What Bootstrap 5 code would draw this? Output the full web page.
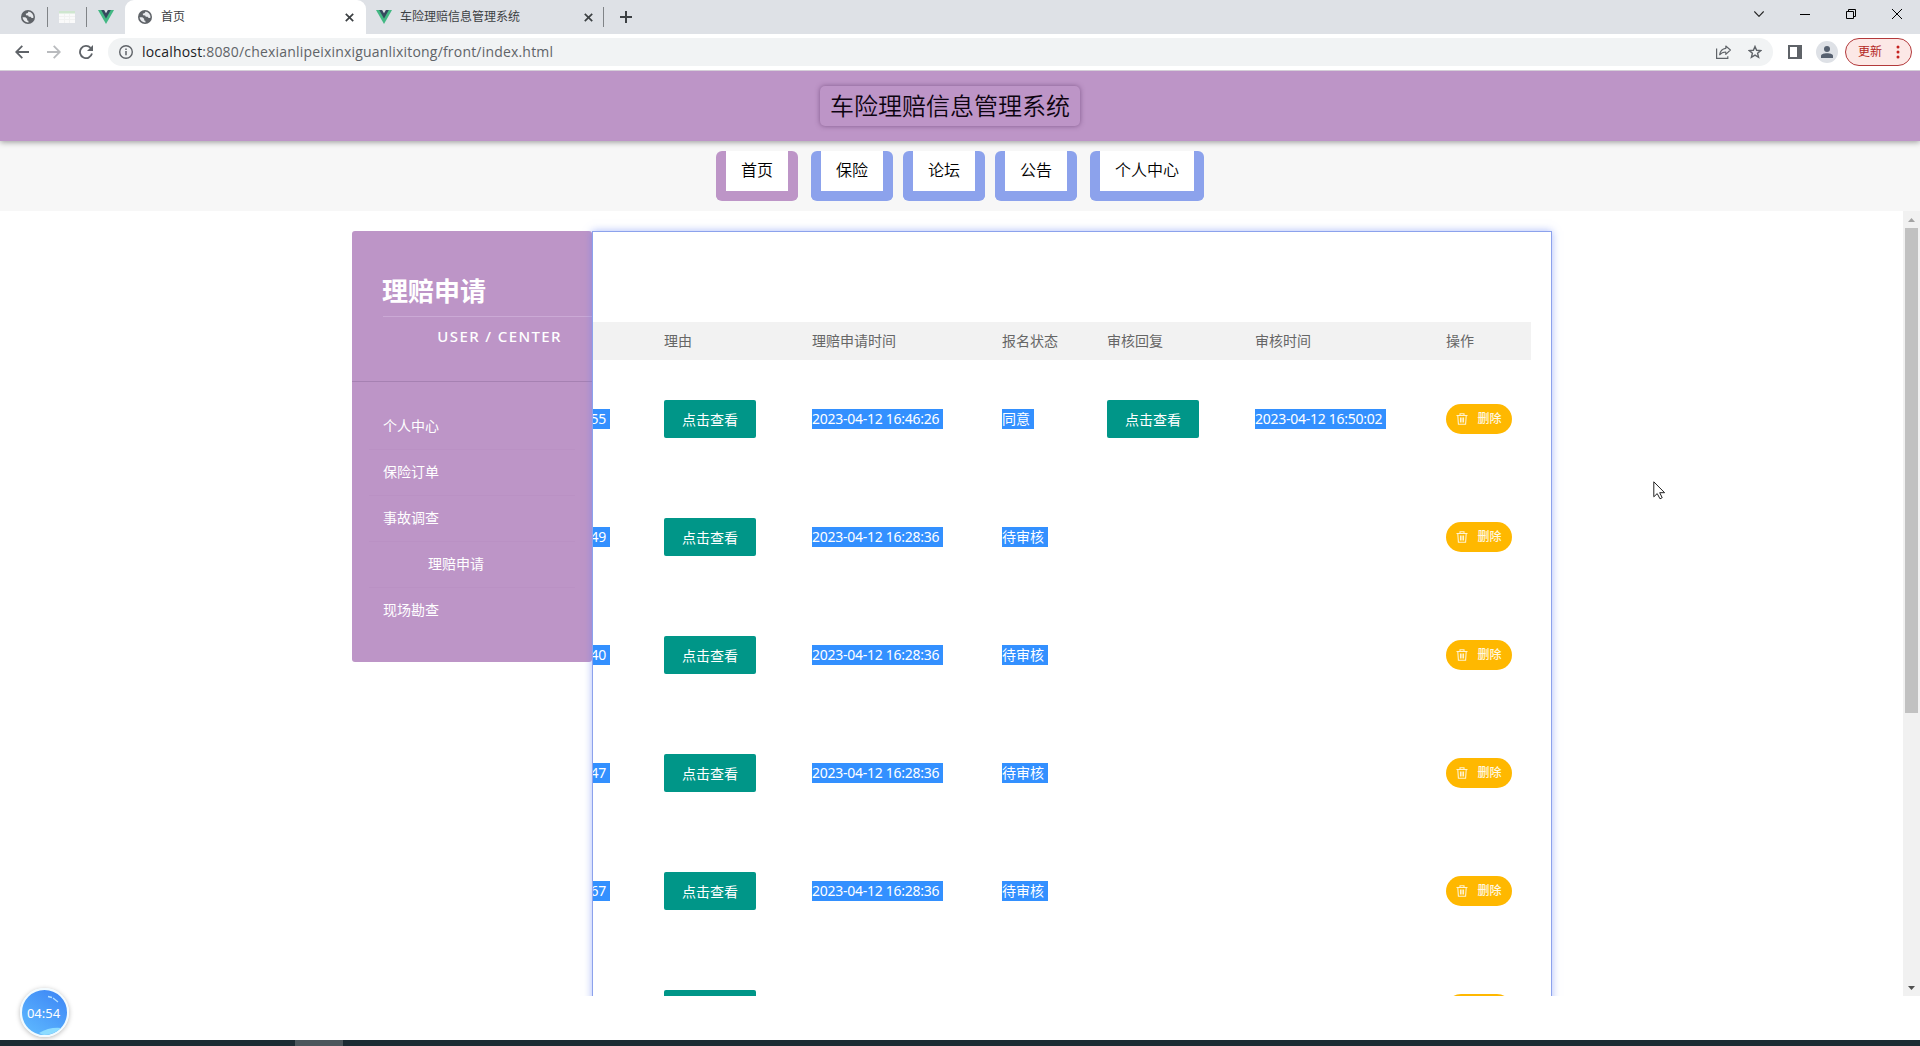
<!DOCTYPE html>
<html lang="zh-CN">
<head>
<meta charset="utf-8">
<title>首页</title>
<link href="https://cdn.jsdelivr.net/npm/bootstrap@5.3.0/dist/css/bootstrap.min.css" rel="stylesheet">
<style>
html{height:1046px;overflow:hidden}
body{font-family:"Noto Sans","Noto Sans CJK SC",sans-serif;font-size:14px;line-height:20px;color:#000;width:1920px;height:1046px;overflow:hidden;background:#fff}
svg{display:block;flex:none}
.tabstrip{height:34px;background:#dee1e6;font-size:12px;color:#3c4043;padding-left:21px}
.pinned{height:34px}
.tabsep{width:1px;height:20px;background:#808387}
.tab-on{width:241px;height:34px;background:#fff;border-radius:9px 9px 0 0;margin-left:11px;padding:0 12px 0 13px}
.tab-off{width:237px;padding:0 10px 0 10px}
.tabtext{line-height:28px;height:28px}
.wincontrols{margin-right:18px;height:28px;gap:36px}
.toolbar{height:37px;border-bottom:1px solid #d5cfd8;padding:0 8px 1px 15px;color:#5f6368}
.navicons{gap:18px}
.address{width:1665px;height:28px;border-radius:14px;background:#f1f3f4;margin-left:15px;padding:0 11px}
.url{font-family:"Open Sans","Noto Sans",sans-serif;margin-left:9px;white-space:nowrap;letter-spacing:.19px;color:#5f6368}
.url b{font-weight:400;color:#202124}
.sidepanel{margin-left:15px}
.avatar{width:22px;height:22px;background:#dee1e6;margin-left:14px}
.update{width:67px;height:28px;border:1px solid #b3393b;border-radius:14px;background:#fce8e6;color:#b3261e;font-size:12px;margin-left:7px;padding:0 11px 0 12px}
.masthead{height:70px;background:#bd95c7;box-shadow:0 1px 6px rgba(0,0,0,.4);padding-right:20px;position:relative;clip-path:inset(0 0 -10px 0)}
.brand{width:260px;height:40px;border-radius:5px;box-shadow:0 0 5px rgba(70,30,80,.5);font-size:24px;line-height:39px;color:#0d0410;font-weight:350}
.mainnav{height:70px;background:#f7f7f7;padding:10px 0 0 716px}
.navtab{height:50px;border:10px solid #8ca2ec;border-top:0;border-radius:6px;background:linear-gradient(#fff,#fff) padding-box;padding:0 15px;font-size:16px;line-height:38px;color:#000;font-weight:350;text-decoration:none;margin-right:10px}
.navtab.wide{margin-left:3px}
.navtab.current{border-color:#bd95c7}
.viewport{height:785px;overflow:hidden}
.stage{padding:20px 0 0 352px}
.sidebar{width:240px;height:431px;background:#bd95c7;border-radius:3px;color:#fff}
.sidehead{height:151px;border-bottom:1px solid #a681b2;padding:41px 0 0 31px}
.sidehead h1{font-size:26px;line-height:38px;height:45px;font-weight:700;margin:0;border-bottom:1px solid #cba9d5;text-indent:-1px}
.sidehead p{font-size:15px;line-height:20px;letter-spacing:1.4px;font-weight:500;padding:9px 30px 0 0;text-align:right}
.sidemenu{padding:22px 17px 0 17px}
.sidemenu a{height:46px;line-height:43px;color:#fff;text-decoration:none;padding-left:14px;border-bottom:1px solid #ba91c4}
.sidemenu a.sub{padding-left:59px}
.sidemenu a:last-child{border:0}
.panel{width:960px;height:1100px;border:1px solid #8ca2ec;box-shadow:0 0 8px rgba(100,130,245,.55);padding-top:90px}
.claims{width:938px;table-layout:fixed;margin:0}
.claims th{height:38px;background:#f2f2f2;color:#666;font-weight:400;padding:0 15px 1px;text-align:left}
.claims td{height:118px;padding:0 15px;vertical-align:middle}
.claims td:first-child{padding-left:0}
.orderclip{width:17px;overflow:hidden;display:flex;justify-content:flex-end}
.picked{background:#3390ff;color:#fff;display:block;width:max-content;height:20px;line-height:20px;padding-right:4px;white-space:nowrap;letter-spacing:-.26px}
.picked.han{letter-spacing:0;line-height:19px}
.btn-view{display:block;width:92px;height:38px;background:#009688;color:#fff;border:0;border-radius:2px;font-size:14px;padding:0;line-height:37px}
.btn-del{width:66px;height:30px;background:#ffb800;color:#fff8e4;border:0;border-radius:15px;font-size:12px;font-weight:500;padding:0;line-height:30px;gap:9px}
.vbar{width:17px;background:#f1f1f1;padding:7px 0 6px}
.vthumb{width:13px;height:485px;background:#c1c1c1;margin-top:6px}
.footer-gap{height:44px}
.taskbar{height:6px;background:#1c2b33;padding-left:295px}
.taskbar span{width:48px;height:6px;background:#4c565c}
.clock{position:absolute;left:20px;top:988px;width:49px;height:49px;border:2px solid #f2fbff;border-radius:50%;background:linear-gradient(35deg,#60bcff,#3b83f5);color:#fff;font-size:13px;box-shadow:0 1px 5px rgba(0,0,0,.28);overflow:hidden;padding-right:2px}
.clock svg{position:absolute;left:0;top:0}
.clock span{position:relative}
.pointer{position:absolute;left:1653px;top:481px}
</style>
<script src="https://cdn.jsdelivr.net/npm/bootstrap@5.3.0/dist/js/bootstrap.bundle.min.js"></script>
</head>
<body>
<svg width="0" height="0" class="position-absolute">
<defs>
<symbol id="globe" viewBox="0 0 16 16"><circle cx="8" cy="8" r="8" fill="#5f6368"/><path d="M1.8 8.2 5 8.400l2.200 1.800-.4 1.400 1.600.7.2 2A6.300 6.300 0 0 1 1.800 8.200zM8.600 1.800l-.9 1.600-2.300.8.4 1.800 2.400.2.7 1.400 2 .2 1.300 1.400h1.900A6.300 6.300 0 0 0 8.600 1.800z" fill="#e8eaed"/></symbol>
<symbol id="vue" viewBox="0 0 16 14"><path d="M0 0h16L8 14z" fill="#42b883"/><path d="M3.2 0h9.6L8 8.6z" fill="#35495e"/><path d="M6.1 0h3.8L8 3.3z" fill="#dee1e6"/></symbol>
<symbol id="cross" viewBox="0 0 8 8"><path d="M.7.7l6.600 6.600M7.300.7.7 7.300" stroke="#3c4043" stroke-width="1.5"/></symbol>
<symbol id="bin" viewBox="0 0 12 12"><path d="M.5 2.500h11M4 2V.8h4V2M1.800 2.700l.6 8.600h7.200l.6-8.600M4.500 4.500v5M6 4.500v5M7.500 4.500v5" fill="none" stroke="#fff3d2" stroke-width="1.1"/></symbol>
</defs></svg>

<div class="tabstrip d-flex align-items-center">
  <div class="pinned d-flex align-items-center">
    <svg width="14" height="14"><use href="#globe"/></svg>
    <i class="tabsep" style="margin-left:12px"></i>
    <svg width="16" height="12" viewBox="0 0 16 12" style="margin-left:11px"><path d="M0 0h16v12H0z" fill="#fafafa"/><path d="M0 0h16v2.500H0z" fill="#cfe6cf"/><path d="M0 5.500h16M0 8.500h16M5.500 3v9M10.500 3v9" stroke="#f1f2f1"/></svg>
    <i class="tabsep" style="margin-left:11px"></i>
    <svg width="16" height="14" style="margin-left:11px"><use href="#vue"/></svg>
  </div>
  <div class="tab-on d-flex align-items-center">
    <svg width="14" height="14"><use href="#globe"/></svg><span class="tabtext" style="margin-left:9px">首页</span>
    <svg width="9" height="9" class="ms-auto"><use href="#cross"/></svg>
  </div>
  <div class="tab-off d-flex align-items-center">
    <svg width="16" height="14"><use href="#vue"/></svg><span class="tabtext ms-2">车险理赔信息管理系统</span>
    <svg width="9" height="9" class="ms-auto"><use href="#cross"/></svg>
  </div>
  <i class="tabsep"></i>
  <svg width="12" height="12" viewBox="0 0 12 12" style="margin-left:16px"><path d="M6 0v12M0 6h12" stroke="#3c4043" stroke-width="2"/></svg>
  <div class="wincontrols ms-auto d-flex align-items-center align-self-start">
    <svg width="10" height="6" viewBox="0 0 10 6"><path d="M.3.5 5 5.300 9.700.5" fill="none" stroke="#222" stroke-width="1.2"/></svg>
    <svg width="10" height="1" viewBox="0 0 10 1"><path d="M0 0h10v1H0z"/></svg>
    <svg width="10" height="10" viewBox="0 0 10 10"><path d="M.5 2.500h7v7h-7zM2.500 2.500v-2h7v7h-2" fill="none" stroke="#000"/></svg>
    <svg width="10" height="10" viewBox="0 0 10 10"><path d="M0 0l10 10M10 0 0 10" stroke="#000"/></svg>
  </div>
</div>

<div class="toolbar d-flex align-items-center">
  <div class="navicons d-flex">
  <svg width="14" height="14" viewBox="0 0 14 14"><path d="M14 7H1.500M7.300.9 1.200 7l6.100 6.100" fill="none" stroke="#5f6368" stroke-width="1.8"/></svg>
  <svg width="14" height="14" viewBox="0 0 14 14"><path d="M0 7h12.500M6.700.9 12.800 7l-6.100 6.100" fill="none" stroke="#b9bbbe" stroke-width="1.8"/></svg>
  <svg width="14" height="14" viewBox="0 0 14 14"><path d="M11.600 2.900A6.100 6.100 0 1 0 13 8.600" fill="none" stroke="#5f6368" stroke-width="1.8"/><path d="M14 0v6H8z" fill="#5f6368"/></svg>
  </div>
  <div class="address d-flex align-items-center">
    <svg width="14" height="14" viewBox="0 0 14 14"><circle cx="7" cy="7" r="6.3" fill="none" stroke="#5f6368" stroke-width="1.4"/><path d="M7 6v4.300M7 3.400v1.500" stroke="#5f6368" stroke-width="1.5"/></svg>
    <span class="url"><b>localhost</b>:8080/chexianlipeixinxiguanlixitong/front/index.html</span>
    <svg width="16" height="14" viewBox="0 0 16 14" class="ms-auto"><path d="M.6 3.500v9.800h11.200v-2" fill="none" stroke="#5f6368" stroke-width="1.2"/><path d="M9.800 1v2.400C6 3.800 4.200 6.200 3.600 9.800 5.200 7.800 7 7 9.800 7v2.400L14.400 5z" fill="none" stroke="#5f6368" stroke-width="1.1" stroke-linejoin="round"/></svg>
    <svg width="14" height="14" viewBox="0 0 14 14" class="ms-3"><path d="M7 1.500l1.600 3.800 4.100.3-3.100 2.700 1 4L7 10.100l-3.600 2.200 1-4L1.300 5.600l4.100-.3z" fill="none" stroke="#5f6368" stroke-width="1.4"/></svg>
  </div>
  <svg class="sidepanel" width="14" height="14" viewBox="0 0 14 14"><path d="M0 0h14v14H0z" fill="#5f6368"/><path d="M2 2h7v10H2z" fill="#fff"/></svg>
  <div class="avatar rounded-circle d-flex align-items-center justify-content-center"><svg width="12" height="12" viewBox="0 0 12 12"><circle cx="6" cy="3" r="3" fill="#56606f"/><path d="M0 12v-2c0-2 3-2.800 6-2.800s6 .8 6 2.800v2z" fill="#56606f"/></svg></div>
  <div class="update d-flex align-items-center justify-content-between"><span>更新</span><svg width="4" height="14" viewBox="0 0 4 14"><g fill="#c5221f"><circle cx="2" cy="2" r="1.5"/><circle cx="2" cy="7" r="1.5"/><circle cx="2" cy="12" r="1.5"/></g></svg></div>
</div>

<header class="masthead d-flex align-items-center justify-content-center"><div class="brand text-center">车险理赔信息管理系统</div></header>
<nav class="mainnav d-flex align-items-start">
  <a class="navtab current" href="#">首页</a><a class="navtab wide" href="#">保险</a><a class="navtab" href="#">论坛</a><a class="navtab" href="#">公告</a><a class="navtab wide" href="#">个人中心</a>
</nav>

<div class="viewport d-flex">
  <main class="stage d-flex align-items-start flex-grow-1">
    <aside class="sidebar">
      <div class="sidehead"><h1>理赔申请</h1><p class="m-0">USER / CENTER</p></div>
      <div class="sidemenu d-flex flex-column"><a href="#">个人中心</a><a href="#">保险订单</a><a href="#">事故调查</a><a class="sub" href="#">理赔申请</a><a href="#">现场勘查</a></div>
    </aside>
    <section class="panel">
      <table class="claims">
        <colgroup><col style="width:56px"><col style="width:148px"><col style="width:190px"><col style="width:105px"><col style="width:148px"><col style="width:191px"><col style="width:100px"></colgroup>
        <thead><tr><th></th><th>理由</th><th>理赔申请时间</th><th>报名状态</th><th>审核回复</th><th>审核时间</th><th>操作</th></tr></thead>
        <tbody id="rows"></tbody>
      </table>
    </section>
  </main>
  <div class="vbar d-flex flex-column align-items-center">
    <svg width="7" height="4" viewBox="0 0 7 4"><path d="M0 4 3.500 0 7 4z" fill="#a3a3a3"/></svg>
    <div class="vthumb"></div>
    <svg width="7" height="4" viewBox="0 0 7 4" class="mt-auto"><path d="M0 0h7L3.500 4z" fill="#505050"/></svg>
  </div>
</div>
<div class="footer-gap"></div>
<div class="taskbar d-flex"><span></span></div>

<div class="clock d-flex align-items-center justify-content-center"><svg width="45" height="45" viewBox="0 0 45 45"><path d="M17 43q10-6 22-5l-6 6-10 2z" fill="#8ddcff"/><path d="M26 6.500l4 1M31 8l5 4" stroke="#b5e0ff" stroke-width="1.300"/></svg><span>04:54</span></div>
<svg class="pointer" width="14" height="19" viewBox="0 0 14 19"><path d="M.8.8v15l3.400-3.200 2.800 5.200 2.200-1.100-2.500-5h4.900z" fill="#fff" stroke="#222"/></svg>

<script>
const claims=[["55","2023-04-12 16:46:26","同意","2023-04-12 16:50:02"],["49","2023-04-12 16:28:36","待审核"],["40","2023-04-12 16:28:36","待审核"],["47","2023-04-12 16:28:36","待审核"],["67","2023-04-12 16:28:36","待审核"],["","",""]];
const view='<button class="btn btn-view">点击查看</button>';
const pick=(t,c='')=>t?`<span class="picked ${c}">${t}</span>`:'';
document.getElementById('rows').innerHTML=claims.map(([id,at,state,reply])=>`<tr><td><div class="orderclip">${pick(id)}</div></td><td>${view}</td><td>${pick(at)}</td><td>${pick(state,'han')}</td><td>${reply?view:''}</td><td>${pick(reply)}</td><td><button class="btn btn-del d-flex align-items-center justify-content-center"><svg width="12" height="12"><use href="#bin"/></svg>删除</button></td></tr>`).join('');
</script>
</body>
</html>
